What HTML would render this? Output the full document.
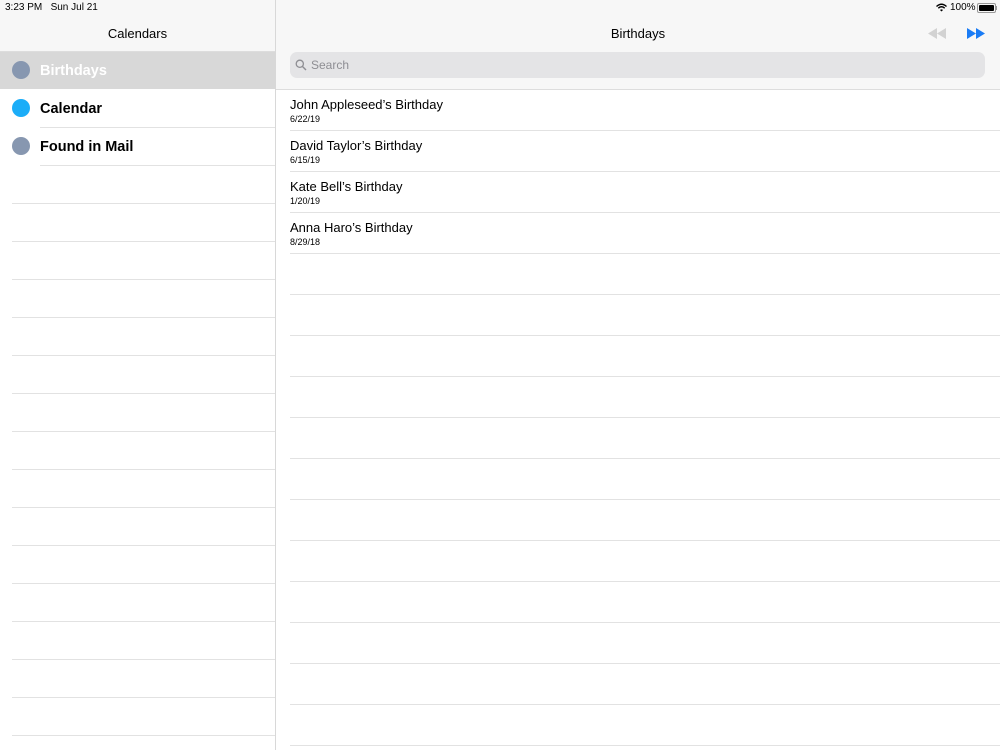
<!DOCTYPE html>
<html><head><style>
body{margin:0;width:1000px;height:750px;overflow:hidden;background:#fff;font-family:"Liberation Sans",sans-serif;position:relative}
.abs{position:absolute}
.side{left:0;top:0;width:275px;height:750px;border-right:1px solid #d8d8d8;background:#fff}
.sh{left:0;top:0;width:275px;height:51px;background:#f7f7f7;border-bottom:1px solid #ddd}
.mh{left:276px;top:0;width:724px;height:89px;background:#f7f7f7;border-bottom:1px solid #ddd}
.dot{width:18px;height:18px;border-radius:50%}
.hl{height:1px;background:#e2e2e2}
.name{font-size:13px;color:#000}
.date{font-size:9px;color:#000}
</style></head><body>
<div class="abs side"></div>
<div class="abs sh"></div>
<div class="abs mh"></div>
<div class="abs" style="left:5px;top:2px;font-size:10px">3:23 PM&nbsp;&nbsp;&nbsp;Sun Jul 21</div>
<svg class="abs" width="11" height="9" viewBox="0 0 11 9" style="left:936px;top:3px"><path d="M0.5 3.5 Q5.5 -1 10.5 3.5" stroke="#000" stroke-width="1.4" fill="none"/><path d="M2.3 5.2 Q5.5 2.3 8.7 5.2" stroke="#000" stroke-width="1.4" fill="none"/><path d="M4 7 L5.5 8.5 L7 7 Q5.5 5.8 4 7Z" fill="#000"/></svg>
<div class="abs" style="left:950px;top:2px;font-size:10px">100%</div>
<div class="abs" style="left:977px;top:3px;width:15px;height:6px;border:1px solid #999;border-radius:2px;padding:1px"><div style="width:15px;height:6px;background:#000;border-radius:1px"></div></div>
<div class="abs" style="left:995px;top:6px;width:1.5px;height:4px;background:#999"></div>
<div class="abs" style="left:0;top:26px;width:275px;text-align:center;font-size:13px">Calendars</div>
<div class="abs" style="left:276px;top:26px;width:724px;text-align:center;font-size:13px">Birthdays</div>
<svg class="abs" style="left:928px;top:28px" width="18" height="11"><path d="M9 0 L0 5.5 L9 11Z M18 0 L9 5.5 L18 11Z" fill="#d2d2d2"/></svg>
<svg class="abs" style="left:967px;top:28px" width="18" height="11"><path d="M0 0 L9 5.5 L0 11Z M9 0 L18 5.5 L9 11Z" fill="#1a7cf5"/></svg>
<div class="abs" style="left:290px;top:52px;width:695px;height:26px;background:#e4e4e6;border-radius:7px"></div>
<svg class="abs" style="left:295px;top:59px" width="12" height="12"><circle cx="4.8" cy="4.8" r="3.6" stroke="#8e8e93" stroke-width="1.3" fill="none"/><path d="M7.5 7.5 L11 11" stroke="#8e8e93" stroke-width="1.4"/></svg>
<div class="abs" style="left:311px;top:58px;font-size:12px;color:#8e8e93">Search</div>
<div class="abs" style="left:0;top:52px;width:275px;height:37px;background:#d8d8d8"></div>
<div class="abs dot" style="left:12px;top:61px;background:#8797b0"></div>
<div class="abs" style="left:40px;top:63px;font-size:14.5px;font-weight:bold;color:#fff">Birthdays</div>
<div class="abs dot" style="left:12px;top:99px;background:#1badf8"></div>
<div class="abs" style="left:40px;top:101px;font-size:14.5px;font-weight:bold">Calendar</div>
<div class="abs dot" style="left:12px;top:137px;background:#8797b0"></div>
<div class="abs" style="left:40px;top:139px;font-size:14.5px;font-weight:bold">Found in Mail</div>
<div class="abs hl" style="left:40px;top:127px;width:235px"></div>
<div class="abs hl" style="left:40px;top:165px;width:235px"></div>
<div class="abs" style="left:12px;top:203px;width:263px;height:540px;background:repeating-linear-gradient(to bottom,#e2e2e2 0,#e2e2e2 1px,transparent 1px,transparent 38px)"></div>
<div class="abs" style="left:290px;top:130px;width:710px;height:620px;background:repeating-linear-gradient(to bottom,#e2e2e2 0,#e2e2e2 1px,transparent 1px,transparent 41px)"></div>
<div class="abs name" style="left:290px;top:97px">John Appleseed’s Birthday</div><div class="abs date" style="left:290px;top:114px">6/22/19</div>
<div class="abs name" style="left:290px;top:138px">David Taylor’s Birthday</div><div class="abs date" style="left:290px;top:155px">6/15/19</div>
<div class="abs name" style="left:290px;top:179px">Kate Bell’s Birthday</div><div class="abs date" style="left:290px;top:196px">1/20/19</div>
<div class="abs name" style="left:290px;top:220px">Anna Haro’s Birthday</div><div class="abs date" style="left:290px;top:237px">8/29/18</div>
</body></html>
